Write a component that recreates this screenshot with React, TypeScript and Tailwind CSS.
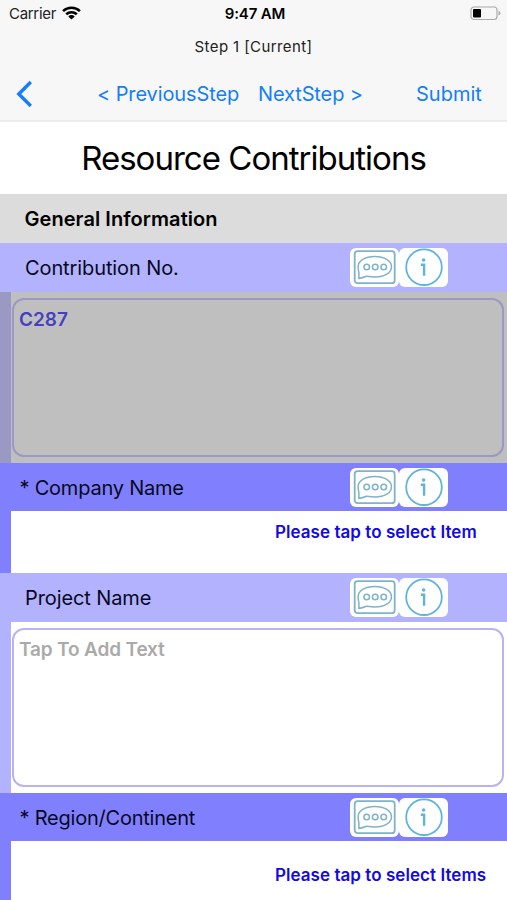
import type { ReactNode } from "react";

function CommentIcon() {
  return (
    <svg width="49" height="39" viewBox="0 0 49 39" fill="none" stroke="#7fb3c9">
      <rect x="4.700" y="3.200" width="40" height="32" rx="3" strokeWidth="1.800" />
      <path d="M8.900 30.500V24.500C8.300 22.500 8.100 20.800 8.100 18.800C8.100 13 15 8.500 24.700 8.500C34.500 8.500 41.500 13 41.500 18.800C41.500 25 34.500 29 25 29C21.500 29 18.500 28.500 16.500 28.200C14 29.200 11.500 30 8.900 30.500Z" strokeWidth="1.500" strokeLinejoin="round" />
      <circle cx="16.700" cy="19" r="2.800" strokeWidth="1.500" />
      <circle cx="25.200" cy="19" r="2.800" strokeWidth="1.500" />
      <circle cx="33.700" cy="19" r="2.800" strokeWidth="1.500" />
    </svg>
  );
}

function InfoIcon() {
  return (
    <svg width="49" height="39" viewBox="0 0 49 39" fill="none" stroke="#5fb4dc">
      <circle cx="25" cy="19.200" r="17.800" strokeWidth="1.800" />
      <circle cx="24.600" cy="12" r="1.800" fill="#5fb4dc" stroke="none" />
      <path d="M21.800 16.800H25.100V27.800" strokeWidth="2.400" />
    </svg>
  );
}

function FieldHeader({ required, children }: { required?: boolean; children: ReactNode }) {
  return (
    <div className={`flex h-full items-center ${required ? "bg-[#8080ff] pl-[19.500px]" : "bg-[#b2b2ff] pl-[25px]"}`}>
      <div className={`flex-1 text-[20px] leading-6 text-[#080820] ${required ? "pt-px tracking-[-0.22px]" : "tracking-[-0.1px]"}`}>{children}</div>
      <div className="mr-[59px] flex">
        <div className="h-[39px] w-[49px] rounded-[6px] bg-white"><CommentIcon /></div>
        <div className="h-[39px] w-[49px] rounded-[6px] bg-white"><InfoIcon /></div>
      </div>
    </div>
  );
}

export default function App() {
  return (
    <div className="h-[900px] w-[507px] overflow-hidden bg-white font-['Inter','Liberation_Sans',sans-serif] text-black">
      <header className="h-[122px] border-b-2 border-[#ececec] bg-[#f7f7f7]">
        <div className="grid h-7 grid-cols-3 items-center pr-[6px] pl-[9px]">
          <div className="flex items-center gap-[6px]">
            <span className="text-[15px] tracking-[-0.3px] text-[#222]">Carrier</span>
            <svg className="-mt-[2px]" width="19" height="14" viewBox="0 0 19 14" fill="none" stroke="#000" strokeWidth="2.600">
              <path d="M1.100 5.100a12.200 12.200 0 0 1 16.800 0M4.200 8.300a7.800 7.800 0 0 1 10.600 0" />
              <path d="M9.500 13.600L6.300 10.400a4.600 4.600 0 0 1 6.400 0Z" fill="#000" stroke="none" />
            </svg>
          </div>
          <span className="text-center text-[15px] font-semibold tracking-[-0.15px] whitespace-nowrap">9:47 AM</span>
          <svg className="-mt-[2px] justify-self-end" width="31" height="15" viewBox="0 0 31 15" fill="none">
            <rect x="1" y="1" width="26" height="12.500" rx="3" stroke="#aaa" strokeWidth="1.200" />
            <rect x="3" y="3" width="8" height="8.500" rx="1" fill="#000" />
            <path d="M28.500 5v4.500q2-.5 2-2.250t-2-2.250Z" fill="#aaa" />
          </svg>
        </div>
        <div className="h-[38px] text-center text-[15px] leading-[38px] tracking-[0.4px] text-[#222]">Step 1 [Current]</div>
        <nav className="flex h-[54px] items-center pl-4 text-[20px] whitespace-nowrap text-[#147efb]">
          <svg width="17" height="27" viewBox="0 0 17 27" fill="none" stroke="#147efb" strokeWidth="3.400">
            <path d="M14.800 2L2.800 14L14.800 26" />
          </svg>
          <span className="ml-[64px] w-[161px] pt-[2px] tracking-[-0.1px]">&lt; PreviousStep</span>
          <span className="w-[158px] pt-[2px] tracking-[-0.12px]">NextStep &gt;</span>
          <span className="pt-[2px]">Submit</span>
        </nav>
      </header>
      <main className="grid grid-rows-[72px_49px_49px_171px_48px_62px_49px_171px_48px_59px]">
        <h1 className="text-center text-[33px] leading-[72px] tracking-[-0.98px]">Resource Contributions</h1>
        <h2 className="bg-[#dcdcdc] pt-px pl-[24.500px] text-[20px] leading-[48px] font-semibold tracking-[0.06px]">General Information</h2>
        <FieldHeader><span>Contribution No.</span></FieldHeader>
        <div className="border-l-[11px] border-[#9999c3] bg-[#bfbfbf] pt-[6px] pr-[3px] pb-[6px] pl-[1px]">
          <div className="h-full rounded-[12px] border-2 border-[#9999c6] px-[5px] pt-[8px] text-[19px] leading-6 font-semibold text-[#4640c0]">C287</div>
        </div>
        <FieldHeader required><span>* Company Name</span></FieldHeader>
        <div className="border-l-[11px] border-[#8080ff] pt-[9px] pl-[264px] text-[17px] leading-6 font-semibold tracking-[0.05px] whitespace-nowrap text-[#1209e4]"><span>Please tap to select Item</span></div>
        <FieldHeader><span>Project Name</span></FieldHeader>
        <div className="border-l-[11px] border-[#b2b2ff] pt-[6px] pr-[3px] pb-[6px] pl-[1px]">
          <div className="h-full rounded-[12px] border-2 border-[#b9b2f4] px-[5px] pt-[8px] text-[19px] leading-6 font-semibold tracking-[-0.15px] text-[#aaa]">Tap To Add Text</div>
        </div>
        <FieldHeader required><span>* Region/Continent</span></FieldHeader>
        <div className="border-l-[11px] border-[#8080ff] pt-[22px] pl-[264px] text-[17px] leading-6 font-semibold tracking-[0.05px] whitespace-nowrap text-[#1209e4]"><span>Please tap to select Items</span></div>
      </main>
    </div>
  );
}
